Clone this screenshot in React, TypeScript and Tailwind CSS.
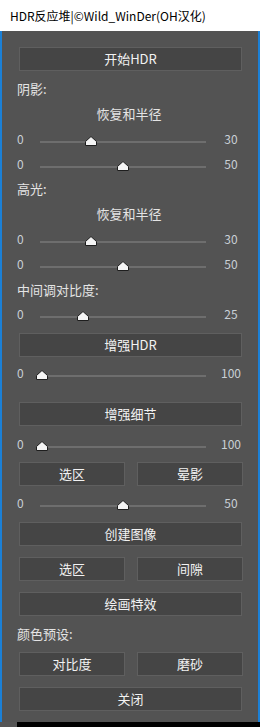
const font = { fontFamily: '"Noto Sans CJK SC", "Noto Sans", sans-serif' }

type SliderProps = { max: number; pos: number; className?: string }

function Slider({ max, pos, className = '' }: SliderProps) {
  return (
    <div className={`flex h-[24px] items-center ${className}`}>
      <div className="w-[38px] shrink-0 pl-[15px] text-[12px] text-[#c9d0d6]">0</div>
      <div className="relative h-[24px] w-[166px] shrink-0">
        <div className="absolute left-0 right-0 top-[14px] h-[2px] bg-[#6e6e6e]" />
        <svg
          className="absolute top-[9px]"
          style={{ left: pos - 6 }}
          width="12"
          height="10"
          viewBox="0 0 12 10"
        >
          <path d="M6 0.5 L11.5 5.5 V9.5 H0.5 V5.5 Z" fill="#f4f4f4" stroke="#1e1e1e" strokeWidth="1" />
        </svg>
      </div>
      <div className="ml-[10px] w-[30px] shrink-0 text-center text-[12px] text-[#c9d0d6]">{max}</div>
    </div>
  )
}

function Btn({ label, className = '' }: { label: string; className?: string }) {
  return (
    <div
      className={`flex h-[24px] items-center justify-center border border-[#5f5f5f] bg-[#454545] text-[13px] text-[#f2f2f2] ${className}`}
    >
      {label}
    </div>
  )
}

function BtnPair({ a, b, className = '' }: { a: string; b: string; className?: string }) {
  return (
    <div className={`flex gap-[12px] pl-[17px] ${className}`}>
      <Btn label={a} className="w-[106px]" />
      <Btn label={b} className="w-[106px]" />
    </div>
  )
}

function Label({ text, className = '' }: { text: string; className?: string }) {
  return (
    <div className={`flex h-[24px] items-center pl-[15px] text-[13px] text-[#e4e4e4] ${className}`}>{text}</div>
  )
}

function Center({ text, className = '' }: { text: string; className?: string }) {
  return (
    <div className={`flex h-[24px] items-center justify-center pr-[2px] text-[13px] text-[#e4e4e4] ${className}`}>
      {text}
    </div>
  )
}

export default function App() {
  return (
    <div className="flex h-[727px] w-[260px] flex-col bg-[#535353]" style={font}>
      <div className="flex h-[31px] items-center bg-white pl-[10px] text-[12px] text-black">
        HDR反应堆|©Wild_WinDer(OH汉化)
      </div>
      <div className="flex h-[691px] flex-col border-x-2 border-[#1b80d6]">
        <div className="mt-[16px] pl-[17px]">
          <Btn label="开始HDR" className="w-[223px]" />
        </div>
        <Label text="阴影:" className="mt-[6px]" />
        <Center text="恢复和半径" className="mt-[1px]" />
        <Slider max={30} pos={50.5} className="mt-[1px]" />
        <Slider max={50} pos={82.5} className="mt-[1px]" />
        <Label text="高光:" className="mt-[1px]" />
        <Center text="恢复和半径" className="mt-[1px]" />
        <Slider max={30} pos={50.5} className="mt-[1px]" />
        <Slider max={50} pos={82.5} className="mt-[1px]" />
        <Label text="中间调对比度:" className="mt-[2px]" />
        <Slider max={25} pos={42.5} />
        <div className="mt-[7px] pl-[17px]">
          <Btn label="增强HDR" className="w-[223px]" />
        </div>
        <Slider max={100} pos={1.5} className="mt-[4px]" />
        <div className="mt-[17px] pl-[17px]">
          <Btn label="增强细节" className="w-[223px]" />
        </div>
        <Slider max={100} pos={1.5} className="mt-[6px]" />
        <BtnPair a="选区" b="晕影" className="mt-[6px]" />
        <Slider max={50} pos={82.5} className="mt-[5px]" />
        <div className="mt-[7px] pl-[17px]">
          <Btn label="创建图像" className="w-[223px]" />
        </div>
        <BtnPair a="选区" b="间隙" className="mt-[11px]" />
        <div className="mt-[11px] pl-[17px]">
          <Btn label="绘画特效" className="w-[223px]" />
        </div>
        <Label text="颜色预设:" className="mt-[6px]" />
        <BtnPair a="对比度" b="磨砂" className="mt-[6px]" />
        <div className="mt-[11px] pl-[17px]">
          <Btn label="关闭" className="w-[223px]" />
        </div>
      </div>
      <div className="flex h-[5px]">
        <div className="w-[17px] bg-[#555555]" />
        <div className="flex-1 bg-black" />
      </div>
    </div>
  )
}
